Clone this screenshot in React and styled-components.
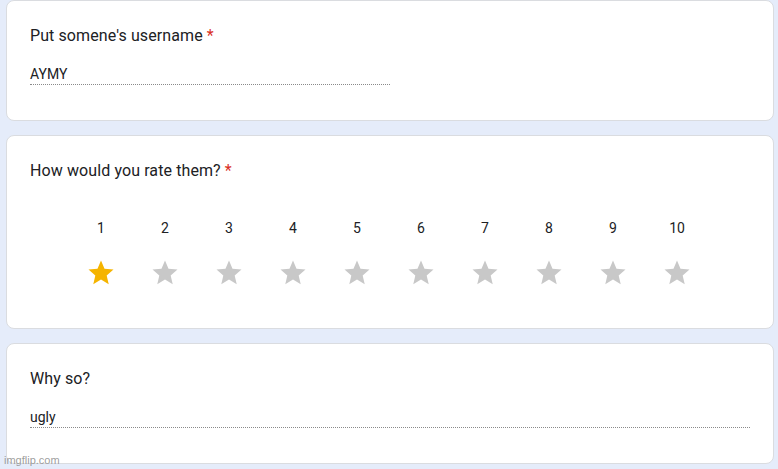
import styled, { createGlobalStyle } from 'styled-components';

const GlobalStyle = createGlobalStyle`
    body {
        margin: 0;
        background: #e5ecfa;
        font-family: Roboto, "Liberation Sans", Arial, sans-serif;
        color: #202124;
    }
`;

const Page = styled.div`
    position: relative;
    display: flex;
    flex-direction: column;
    gap: 14px;
    padding: 0 4px 0 6px;
    height: 469px;
    box-sizing: border-box;
    overflow: hidden;
`;

const Card = styled.div`
    background: #fff;
    border: 1px solid #dadce0;
    border-radius: 8px;
    padding: 23px 23px 35px 23px;
`;

const Question = styled.div`
    font-size: 16px;
    line-height: 24px;
    letter-spacing: 0.1px;
    color: #202124;
`;

const Required = styled.span`
    color: #d93025;
    padding-left: 4px;
`;

const Answer = styled.div`
    margin-top: 16px;
    width: ${props => props.$width};
    font-size: 14px;
    line-height: 20px;
    color: #202124;
    border-bottom: 1px dotted #8a8a8a;
`;

const Scale = styled.div`
    display: flex;
    justify-content: center;
    margin: 35px 0 5px;
    padding-right: 2px;
`;

const ScaleItem = styled.div`
    width: 64px;
    display: flex;
    flex-direction: column;
    align-items: center;
    gap: 20px;
`;

const ScaleLabel = styled.div`
    font-size: 14px;
    line-height: 20px;
    color: #202124;
`;

const Star = styled.svg`
    width: 30px;
    height: 30px;
    fill: ${props => (props.$on ? '#f5b400' : '#c8c8c8')};
`;

const Watermark = styled.div`
    position: absolute;
    left: 4px;
    bottom: 3px;
    font-family: "Liberation Sans", Arial, sans-serif;
    font-size: 11px;
    color: rgba(140, 140, 140, 0.85);
`;

const rating = 1;

export default function App() {
    return (
        <>
            <GlobalStyle />
            <Page>
                <Card>
                    <Question>
                        Put somene's username<Required>*</Required>
                    </Question>
                    <Answer $width="360px">AYMY</Answer>
                </Card>
                <Card>
                    <Question>
                        How would you rate them?<Required>*</Required>
                    </Question>
                    <Scale>
                        {Array.from({ length: 10 }, (_, i) => (
                            <ScaleItem key={i}>
                                <ScaleLabel>{i + 1}</ScaleLabel>
                                <Star viewBox="0 0 24 24" $on={i < rating}>
                                    <path d="M12 17.27L18.18 21l-1.64-7.03L22 9.24l-7.19-.61L12 2 9.19 8.63 2 9.24l5.46 4.73L5.82 21z" />
                                </Star>
                            </ScaleItem>
                        ))}
                    </Scale>
                </Card>
                <Card>
                    <Question>Why so?</Question>
                    <Answer $width="100%">ugly</Answer>
                </Card>
                <Watermark>imgflip.com</Watermark>
            </Page>
        </>
    );
}
